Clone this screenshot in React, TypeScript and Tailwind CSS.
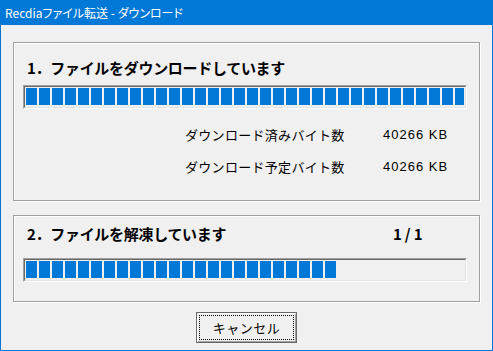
const JP = "font-['Noto_Sans_CJK_JP','Noto_Sans',sans-serif]";

function Bar({ blocks }: { blocks: number }) {
  return (
    <div className="h-[24px] w-[444px] border-t border-l border-b border-r border-t-[#a0a0a0] border-l-[#a0a0a0] border-b-white border-r-white">
      <div className="h-full w-full border-t border-l border-b border-r border-t-[#696969] border-l-[#696969] border-b-[#e3e3e3] border-r-[#e3e3e3] bg-[#f0f0f0] p-px">
        <div className="flex h-[17px] gap-[2px] overflow-hidden">
          {Array.from({ length: blocks }).map((_, i) => (
            <div key={i} className="h-[17px] w-[11px] shrink-0 bg-[#0078d7]" />
          ))}
        </div>
      </div>
    </div>
  );
}

function Group({ children, className }: { children: React.ReactNode; className: string }) {
  return (
    <div
      className={
        "border border-[#a0a0a0] shadow-[inset_1px_1px_0_#fff,1px_1px_0_#fff] " + className
      }
    >
      {children}
    </div>
  );
}

export default function App() {
  return (
    <div className={`flex h-[351px] w-[493px] flex-col bg-[#f0f0f0] ${JP}`}>
      {/* title bar */}
      <div className="flex h-[25px] shrink-0 items-center bg-[#0078d7] pl-[5px] text-[12px] text-white [font-feature-settings:'palt']">
        Recdiaファイル転送 - ダウンロード
      </div>

      <div className="flex flex-1 flex-col border-x border-b border-[#0078d7] px-[12px] pt-[17px]">
        <Group className="h-[159px] pl-[9px] pt-[14px]">
          <div className="flex h-[20px] items-center pl-[4px] text-[15px] font-bold leading-none tracking-[-0.3px] text-black">
            1．ファイルをダウンロードしています
          </div>
          <div className="mt-[8px]">
            <Bar blocks={34} />
          </div>
          <div className="mt-[16px] flex h-[20px] items-center pl-[162px] text-[13px] text-black">
            <span className="w-[198px] tracking-[0.3px]">ダウンロード済みバイト数</span>
            <span className="font-['Liberation_Sans',sans-serif] tracking-[1px]">40266 KB</span>
          </div>
          <div className="mt-[12px] flex h-[20px] items-center pl-[162px] text-[13px] text-black">
            <span className="w-[198px] tracking-[0.3px]">ダウンロード予定バイト数</span>
            <span className="font-['Liberation_Sans',sans-serif] tracking-[1px]">40266 KB</span>
          </div>
        </Group>

        <Group className="mt-[14px] h-[87px] pl-[9px] pt-[7px]">
          <div className="flex h-[20px] items-center pl-[4px] text-[15px] font-bold leading-none text-black">
            <span className="w-[366px] tracking-[-0.3px]">2．ファイルを解凍しています</span>
            <span className="tracking-[3px]">1/1</span>
          </div>
          <div className="mt-[15px]">
            <Bar blocks={24} />
          </div>
        </Group>

        <div className="mt-[10px] flex justify-center">
          <button className="relative h-[31px] w-[101px] border border-[#696969] bg-[#f0f0f0] text-[13px] tracking-[0.5px] text-black shadow-[inset_1px_1px_0_#fff,inset_-1px_-1px_0_#a0a0a0]">
            <span className="pointer-events-none absolute inset-[2px] border border-dotted border-black" />
            キャンセル
          </button>
        </div>
      </div>
    </div>
  );
}
